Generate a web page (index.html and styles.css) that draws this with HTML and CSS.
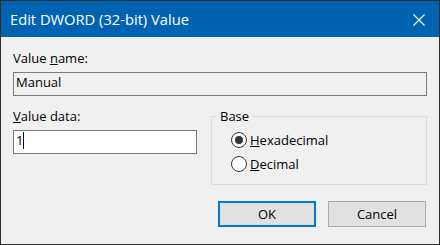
FILE: index.html
```html
<!DOCTYPE html>
<html>
<head>
<meta charset="utf-8">
<link rel="stylesheet" href="styles.css">
</head>
<body>
<div class="window">
  <div class="titlebar">
    <span class="title">Edit DWORD (32-bit) Value</span>
    <svg class="close" width="12" height="12" viewBox="0 0 12 12"><path d="M0.5 0.5 L11.5 11.5 M11.5 0.5 L0.5 11.5" stroke="#fff" stroke-width="1.1" fill="none"/></svg>
  </div>
  <div class="client">
    <div class="label first">Value <u>n</u>ame:</div>
    <div class="textbox readonly">Manual</div>
    <div class="row">
      <div class="leftcol">
        <div class="label"><u>V</u>alue data:</div>
        <div class="textbox editable"><span>1</span><span class="caret"></span></div>
      </div>
      <fieldset class="group">
        <legend class="legend">Base</legend>
        <div class="radio"><span class="circle checked"></span><span class="rlabel"><u>H</u>exadecimal</span></div>
        <div class="radio"><span class="circle"></span><span class="rlabel"><u>D</u>ecimal</span></div>
      </fieldset>
    </div>
    <div class="buttons">
      <div class="btn default">OK</div>
      <div class="btn">Cancel</div>
    </div>
  </div>
</div>
</body>
</html>
```

FILE: styles.css
```css
html, body {
  margin: 0;
  padding: 0;
  background: #f0f0f0;
}
.window {
  width: 440px;
  height: 245px;
  box-sizing: border-box;
  border: 1px solid #2e2e2e;
  background: #f0f0f0;
  display: flex;
  flex-direction: column;
  font-family: "Open Sans", "Liberation Sans", sans-serif;
  font-size: 13px;
  color: #000;
}
.titlebar {
  height: 36px;
  flex: none;
  background: #0063b1;
  display: flex;
  align-items: center;
  justify-content: space-between;
  padding: 0 14px 0 9px;
}
.title {
  color: #fff;
  font-size: 14.7px;
  line-height: 20px;
}
.close {
  display: block;
  margin-top: 1px;
}
.client {
  padding: 0 12px;
  display: flex;
  flex-direction: column;
}
.label {
  line-height: 16px;
  white-space: nowrap;
}
.label.first {
  margin-top: 13px;
}
.textbox {
  margin-top: 6px;
  box-sizing: border-box;
  height: 24px;
  border: 1px solid #7a7a7a;
  padding: 1px 2px 0 2px;
  line-height: 16px;
  overflow: hidden;
  white-space: nowrap;
}
.textbox.readonly {
  background: #f0f0f0;
}
.textbox.editable {
  background: #fff;
}
.caret {
  display: inline-block;
  width: 1px;
  height: 17px;
  background: #000;
  vertical-align: -4px;
}
.row {
  margin-top: 12px;
  display: flex;
  gap: 14px;
}
.leftcol {
  width: 184px;
  flex: none;
}
.group {
  flex: 1;
  margin: 0;
  border: 1px solid #dcdcdc;
  padding: 4px 0 8px 4px;
  min-width: 0;
}
.legend {
  padding: 0 3px 0 4px;
  line-height: 16px;
}
.radio {
  margin-left: 15px;
  height: 24px;
  display: flex;
  align-items: center;
  gap: 3px;
  line-height: 24px;
}
.circle {
  width: 16px;
  height: 16px;
  box-sizing: border-box;
  border: 1px solid #333;
  border-radius: 50%;
  background: #fff;
  display: flex;
  align-items: center;
  justify-content: center;
  flex: none;
}
.circle.checked::after {
  content: "";
  width: 8px;
  height: 8px;
  border-radius: 50%;
  background: #333;
}
.buttons {
  margin-top: 16px;
  margin-right: 1px;
  display: flex;
  justify-content: flex-end;
  gap: 12px;
}
.btn {
  width: 98px;
  height: 26px;
  box-sizing: border-box;
  background: #e1e1e1;
  border: 1px solid #adadad;
  line-height: 24px;
  text-align: center;
}
.btn.default {
  border: 2px solid #0078d7;
  line-height: 22px;
}
```
